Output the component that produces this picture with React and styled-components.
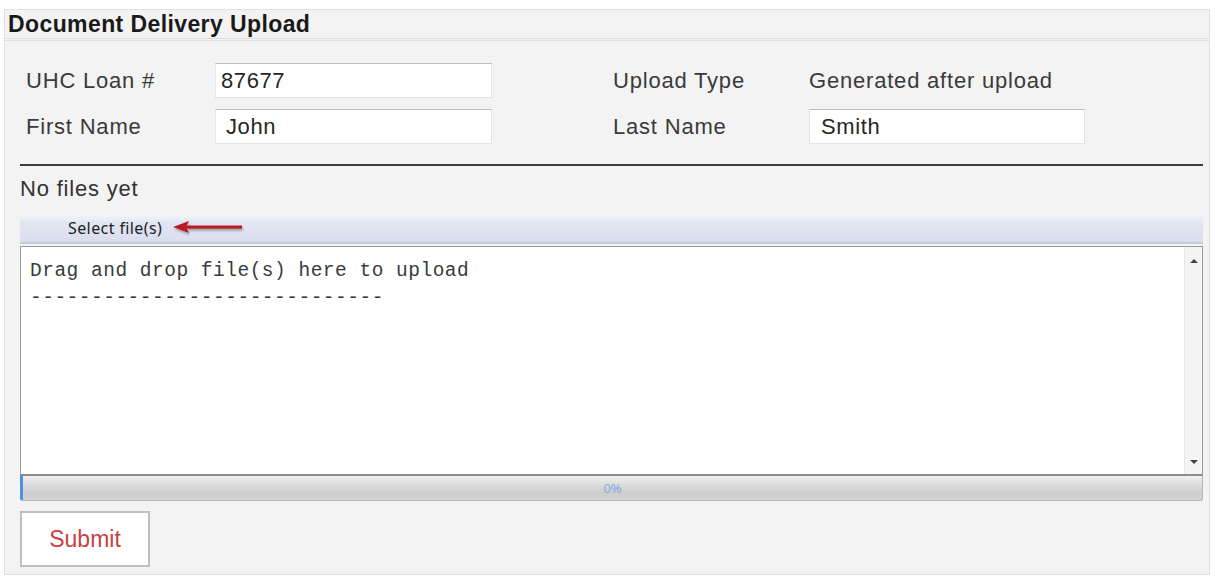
import React from 'react'
import styled, { createGlobalStyle } from 'styled-components'

const GlobalStyle = createGlobalStyle`
  html, body {
    margin: 0;
    padding: 0;
    background: #ffffff;
    font-family: "Liberation Sans", Arial, sans-serif;
  }
`

const Page = styled.div`
  padding: 9px 5px 2px 4px;
`

const Panel = styled.section`
  background: #f3f3f3;
  border: 1px solid #e2e2e2;
  height: 566px;
  box-sizing: border-box;
  display: flex;
  flex-direction: column;
`

const Header = styled.header`
  height: 28px;
  padding-left: 3px;
  display: flex;
  align-items: center;
  border-bottom: 3px double #dedede;
  font-size: 23px;
  font-weight: bold;
  letter-spacing: 0.4px;
  color: #1a1a1a;
`

const Body = styled.div`
  padding: 22px 6px 0 15px;
`

const FieldGrid = styled.div`
  display: grid;
  grid-template-columns: 189px 277px 121px 196px 276px;
  grid-auto-rows: 35px;
  row-gap: 11px;
  padding-left: 6px;
`

const Label = styled.div`
  display: flex;
  align-items: center;
  font-size: 22px;
  color: #3a3a3a;
  letter-spacing: 0.8px;
`

const Input = styled.input`
  box-sizing: border-box;
  width: 100%;
  height: 35px;
  margin: 0;
  padding: 0 ${p => p.$pad || 6}px;
  border: 1px solid #e4e4e4;
  border-top-color: #bdbdbd;
  background: #ffffff;
  font-family: "Liberation Sans", Arial, sans-serif;
  font-size: 22px;
  letter-spacing: 0.6px;
  color: #262626;
  outline: none;
`

const Rule = styled.hr`
  margin: 20px 0 0;
  border: 0;
  border-top: 2px solid #3c3c3c;
`

const Status = styled.div`
  margin-top: 10px;
  font-size: 22px;
  color: #333;
  letter-spacing: 0.8px;
  line-height: 26px;
`

const SelectBar = styled.div`
  margin-top: 12px;
  height: 30px;
  display: flex;
  align-items: center;
  gap: 10px;
  padding-left: 48px;
  background: linear-gradient(#f6f7fb 0%, #e3e6f2 30%, #d9ddee 100%);
  border-bottom: 2px solid #c9cbd4;
  box-sizing: border-box;
`

const SelectLabel = styled.span`
  font-family: "Noto Sans", "Open Sans", sans-serif;
  font-size: 16px;
  color: #1e1e1e;
  letter-spacing: 0.4px;
`

const DropZone = styled.div`
  margin-top: 2px;
  height: 230px;
  display: flex;
  background: #ffffff;
  border: 1px solid #9a9a9a;
  border-bottom: 2px solid #8c8c8c;
  box-sizing: border-box;
`

const DropText = styled.pre`
  flex: 1;
  margin: 0;
  padding: 11px 9px;
  font-family: "Liberation Mono", "Courier New", monospace;
  font-size: 19.5px;
  line-height: 27px;
  letter-spacing: 0.5px;
  color: #3a3a3a;
`

const Scroll = styled.div`
  width: 17px;
  display: flex;
  flex-direction: column;
  justify-content: space-between;
  align-items: center;
  padding: 12px 0 10px;
  background: #f4f4f4;
  border-left: 1px solid #e6e6e6;
`

const Arrow = styled.span`
  width: 0;
  height: 0;
  border-left: 4px solid transparent;
  border-right: 4px solid transparent;
  ${p => p.$down
    ? 'border-top: 4px solid #444;'
    : 'border-bottom: 4px solid #444;'}
`

const Progress = styled.div`
  height: 25px;
  display: flex;
  align-items: center;
  justify-content: center;
  border: 1px solid #b4b4b4;
  border-top: 0;
  border-left: 3px solid #4d8fe0;
  border-radius: 0 0 3px 3px;
  background: linear-gradient(#f0f0f0 0%, #e0e0e0 30%, #cdcdcd 70%, #d6d6d6 100%);
  box-sizing: border-box;
  font-family: "Noto Sans", "Open Sans", sans-serif;
  font-size: 13px;
  color: #7ea9e0;
`

const Submit = styled.button`
  margin-top: 10px;
  width: 130px;
  height: 56px;
  background: #ffffff;
  border: 2px solid #bfbfbf;
  font-family: "Liberation Sans", Arial, sans-serif;
  font-size: 23px;
  color: #c8413f;
  cursor: pointer;
`

const PointerArrow = () => (
  <svg width="76" height="18" viewBox="0 0 76 18">
    <defs>
      <filter id="soft" x="-10%" y="-50%" width="120%" height="200%">
        <feDropShadow dx="1" dy="2" stdDeviation="1.3" floodColor="#000" floodOpacity="0.3" />
      </filter>
    </defs>
    <g filter="url(#soft)">
      <polygon points="1,8 17,2 14,8 17,14" fill="#b81e22" />
      <rect x="13" y="6.5" width="57" height="3.2" fill="#b81e22" />
    </g>
  </svg>
)

export default function App() {
  return (
    <>
      <GlobalStyle />
      <Page>
        <Panel>
          <Header>Document Delivery Upload</Header>
          <Body>
            <FieldGrid>
              <Label>UHC Loan #</Label>
              <Input defaultValue="87677" $pad={5} />
              <div />
              <Label>Upload Type</Label>
              <Label>Generated after upload</Label>

              <Label>First Name</Label>
              <Input defaultValue="John" $pad={10} />
              <div />
              <Label>Last Name</Label>
              <Input defaultValue="Smith" $pad={11} />
            </FieldGrid>
            <Rule />
            <Status>No files yet</Status>
            <SelectBar>
              <SelectLabel>Select file(s)</SelectLabel>
              <PointerArrow />
            </SelectBar>
            <DropZone>
              <DropText>{'Drag and drop file(s) here to upload\n-----------------------------'}</DropText>
              <Scroll>
                <Arrow />
                <Arrow $down />
              </Scroll>
            </DropZone>
            <Progress>0%</Progress>
            <Submit>Submit</Submit>
          </Body>
        </Panel>
      </Page>
    </>
  )
}
